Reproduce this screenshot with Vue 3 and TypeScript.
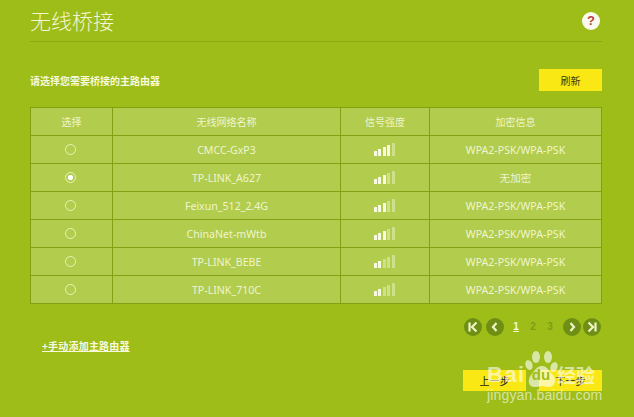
<script setup lang="ts">
interface Row { name: string; enc: string; level: number; on?: boolean }
const rows: Row[] = [
  { name: 'CMCC-GxP3', enc: 'WPA2-PSK/WPA-PSK', level: 4 },
  { name: 'TP-LINK_A627', enc: '无加密', level: 3, on: true },
  { name: 'Feixun_512_2.4G', enc: 'WPA2-PSK/WPA-PSK', level: 3 },
  { name: 'ChinaNet-mWtb', enc: 'WPA2-PSK/WPA-PSK', level: 3 },
  { name: 'TP-LINK_BEBE', enc: 'WPA2-PSK/WPA-PSK', level: 2 },
  { name: 'TP-LINK_710C', enc: 'WPA2-PSK/WPA-PSK', level: 2 },
]
const bars = [5, 7, 9, 11, 13]
</script>

<template>
  <div class="page">
    <header class="head">
      <h1 class="title">无线桥接</h1>
      <span class="help">?</span>
    </header>
    <div class="tools">
      <span class="hint">请选择您需要桥接的主路由器</span>
      <button class="btn">刷新</button>
    </div>
    <div class="table">
      <div class="row top">
        <div class="cell">选择</div>
        <div class="cell">无线网络名称</div>
        <div class="cell">信号强度</div>
        <div class="cell">加密信息</div>
      </div>
      <div v-for="r in rows" :key="r.name" class="row body">
        <div class="cell"><span class="radio" :class="{ on: r.on }"></span></div>
        <div class="cell">{{ r.name }}</div>
        <div class="cell">
          <span class="signal">
            <i v-for="(h, n) in bars" :key="h" :class="{ dim: n >= r.level }" :style="{ height: h + 'px' }"></i>
          </span>
        </div>
        <div class="cell">{{ r.enc }}</div>
      </div>
    </div>
    <nav class="pager">
      <span class="pg">
        <svg viewBox="0 0 18 18"><path d="M5.5 4.5v9M12.5 4.5 8 9l4.500 4.500" /></svg>
      </span>
      <span class="pg before-nums">
        <svg viewBox="0 0 18 18"><path d="M10.500 5 7 9l3.500 4" /></svg>
      </span>
      <span class="num cur">1</span>
      <span class="num">2</span>
      <span class="num">3</span>
      <span class="pg after-nums">
        <svg viewBox="0 0 18 18"><path d="M7.500 5 11 9l-3.500 4" /></svg>
      </span>
      <span class="pg last">
        <svg viewBox="0 0 18 18"><path d="M12.500 4.500v9M5.500 4.500 10 9l-4.500 4.500" /></svg>
      </span>
    </nav>
    <a class="add">+手动添加主路由器</a>
    <div class="foot">
      <button class="btn">上一步</button>
      <button class="btn">下一步</button>
    </div>
    <div class="mark">
      <svg class="paw" viewBox="0 0 34 42">
        <ellipse cx="12" cy="9" rx="4" ry="6" />
        <ellipse cx="24" cy="9" rx="4" ry="6" />
        <ellipse cx="5" cy="17" rx="3.500" ry="5" transform="rotate(-20 5 17)" />
        <ellipse cx="30" cy="19" rx="3.500" ry="5" transform="rotate(20 30 19)" />
        <path d="M18 18c5 0 7 5 11 9s2 13-5 12c-3 0-4-1-6-1s-3 1-6 1c-8 1-9-7-5-12s6-9 11-9z" />
      </svg>
      <div class="brand">
        <span class="bai">Bai</span>
        <span class="du">du</span>
        <span class="jy">经验</span>
      </div>
      <div class="url">jingyan.baidu.com</div>
    </div>
  </div>
</template>

<style>
html, body { margin: 0; background: #9ebd19; }
</style>

<style scoped>
.page {
  position: relative;
  width: 634px;
  height: 417px;
  overflow: hidden;
  box-sizing: border-box;
  padding: 0 32px 0 30px;
  background: #9ebd19;
  color: #fff;
  font-family: "Noto Sans CJK SC", "Noto Sans", sans-serif;
  font-size: 10px;
}
.head {
  display: flex;
  align-items: center;
  justify-content: space-between;
  height: 41px;
  border-bottom: 1px solid #8ba818;
  padding-right: 2px;
}
.title {
  margin: 0;
  font-size: 21px;
  font-weight: 300;
  color: #f2f6d2;
  line-height: 41px;
}
.help {
  width: 18px;
  height: 18px;
  border-radius: 50%;
  background: #fbfbf0;
  color: #b5403a;
  font: bold 13px/18px "Liberation Sans", sans-serif;
  text-align: center;
}
.tools {
  display: flex;
  align-items: center;
  justify-content: space-between;
  margin-top: 27px;
}
.hint { font-weight: 700; color: #f6f9dd; }
.btn {
  width: 63px;
  height: 22px;
  padding: 0;
  border: 0;
  background: #f9e814;
  color: #3c3c10;
  font: inherit;
}
.table {
  margin-top: 16px;
  border: 1px solid #82a012;
  background: #b2cc4e;
  color: #eff5cf;
}
.row {
  display: grid;
  grid-template-columns: 81px 228px 89px 1fr;
  height: 28px;
  border-top: 1px solid #82a012;
  box-sizing: border-box;
}
.row.top { border-top: 0; height: 27px; }
.cell {
  display: flex;
  align-items: center;
  justify-content: center;
  border-left: 1px solid #82a012;
  font-family: "Noto Sans", "Noto Sans CJK SC", sans-serif;
  font-size: 10px;
  white-space: nowrap;
}
.body .cell { font-size: 10.600px; }
.cell:first-child { border-left: 0; }
.radio {
  box-sizing: border-box;
  width: 11px;
  height: 11px;
  margin-right: 2px;
  border: 1.500px solid #eaf3b8;
  border-radius: 50%;
}
.radio.on {
  background: radial-gradient(circle, #fff 0 2.500px, transparent 3px);
}
.signal { display: flex; align-items: flex-end; gap: 1.500px; height: 13px; margin-right: 2px; }
.signal i {
  display: block;
  width: 3px;
  background: #f7fae0;
}
.signal i.dim { background: #cfe08a; }
.pager {
  display: flex;
  align-items: center;
  justify-content: flex-end;
  gap: 4px;
  margin-top: 14px;
  height: 18px;
  padding-right: 1px;
}
.pg {
  width: 18px;
  height: 18px;
  border-radius: 50%;
  background: #6f8f14;
}
.pg svg { display: block; }
.pg path { fill: none; stroke: #eef4c8; stroke-width: 2.200; }
.before-nums { margin-right: 1.500px; }
.after-nums { margin-left: 2.500px; }
.last { margin-left: -2px; }
.num {
  width: 13px;
  text-align: center;
  color: #7f9c16;
  font: bold 10px/14px "Liberation Sans", sans-serif;
}
.cur { color: #f6f9dd; text-decoration: underline; }
.add {
  display: block;
  width: fit-content;
  margin: 2px 0 0 12px;
  font-weight: 700;
  letter-spacing: .2px;
  color: #f6f9dd;
  text-decoration: underline;
}
.foot {
  display: flex;
  justify-content: flex-end;
  gap: 13px;
  margin-top: 17px;
}
.foot .btn { height: 21px; color: #222; }
.mark {
  position: absolute;
  left: 487px;
  top: 348px;
  width: 112px;
  height: 56px;
  color: rgba(255, 255, 255, .6);
}
.paw {
  position: absolute;
  left: 37px;
  top: 0;
  width: 34px;
  height: 42px;
  fill: rgba(255, 255, 255, .62);
}
.brand {
  position: relative;
  display: flex;
  align-items: center;
  height: 22px;
  margin-top: 16px;
  white-space: nowrap;
}
.bai {
  width: 38px;
  font: 700 22px/22px "Liberation Sans", sans-serif;
  letter-spacing: 1.500px;
}
.du {
  width: 32px;
  text-align: center;
  font: 700 15px/22px "Liberation Sans", sans-serif;
  color: #9ebd19;
}
.jy {
  font: 700 19px/22px "Noto Sans CJK SC", sans-serif;
}
.url {
  margin-top: 1px;
  font: 14px/16px "Liberation Sans", sans-serif;
  letter-spacing: .15px;
  white-space: nowrap;
}
</style>
